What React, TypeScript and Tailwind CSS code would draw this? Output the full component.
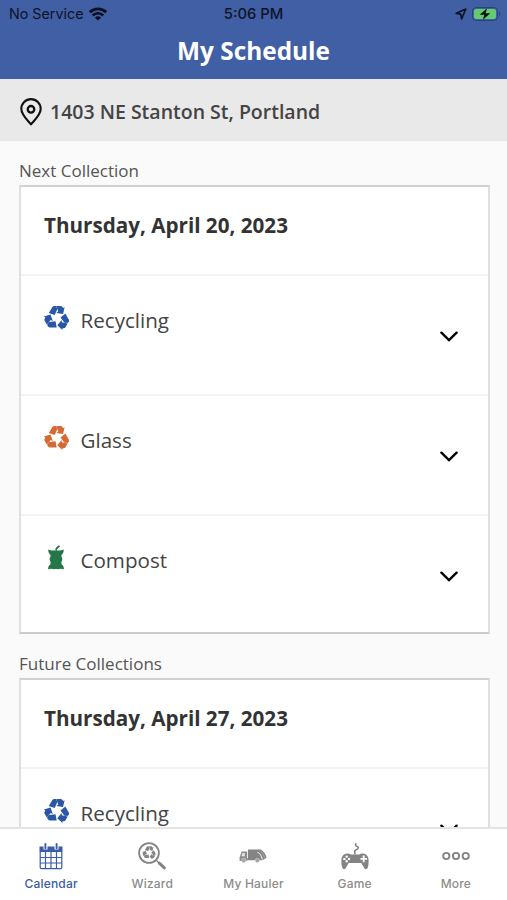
import type { ReactNode } from 'react'

type Kind = 'recycling' | 'glass' | 'compost'

const UPCOMING: { kind: Kind; label: string }[] = [
    { kind: 'recycling', label: 'Recycling' },
    { kind: 'glass', label: 'Glass' },
    { kind: 'compost', label: 'Compost' },
]

function WifiIcon() {
    return (
        <svg width="18" height="14" viewBox="0 0 18 14" fill="none" stroke="#0b1020">
            <path d="M.8 5.2a11.6 11.6 0 0 1 16.4 0" strokeWidth="2.7" />
            <path d="M3.7 8.5a7.5 7.5 0 0 1 10.6 0" strokeWidth="2.5" />
            <path d="M9 13.6 5.9 10.7a4.5 4.5 0 0 1 6.2 0Z" fill="#0b1020" stroke="none" />
        </svg>
    )
}

function LocationIcon() {
    return (
        <svg width="12" height="12" viewBox="0 0 12 12" fill="none">
            <path d="M10.8 1 1.2 5.3l4.5.9.9 4.6Z" stroke="#0b1428" strokeWidth="1.7" strokeLinejoin="round" />
        </svg>
    )
}

function BatteryIcon() {
    return (
        <svg width="30" height="14" viewBox="0 0 30 14">
            <rect x="0.5" y="0.5" width="25" height="13" rx="3.6" fill="none" stroke="#2b437a" />
            <rect x="2" y="2" width="22" height="10" rx="2" fill="#63cc6c" />
            <path d="M27.2 4.8c1.6.5 1.6 3.9 0 4.4Z" fill="#2b437a" />
            <path d="M15 1.2 7.7 7.7h4.6l-1.4 5.1 7.4-6.6h-4.7Z" fill="#0b1010" />
        </svg>
    )
}

function PinIcon() {
    return (
        <svg width="22" height="28" viewBox="0 0 22 28" fill="none" stroke="#111" strokeWidth="2.1">
            <path d="M11 26.4C7.6 22.3 1.3 17 1.3 10.8a9.7 9.7 0 0 1 19.4 0c0 6.2-6.3 11.5-9.7 15.6Z" strokeLinejoin="round" />
            <circle cx="11" cy="11.3" r="3.3" strokeWidth="2.3" />
        </svg>
    )
}

// One folded arrow of the recycling loop, turned three times round the centre
const ARROW_TURNS = ['rotate(0 50 57)', 'rotate(120 50 57)', 'rotate(240 50 57)']

function RecycleIcon({ size, color, x, y }: { size: number; color: string; x?: number; y?: number }) {
    return (
        <svg x={x} y={y} width={size} height={size} viewBox="-9 0 114 110" fill={color}>
            {ARROW_TURNS.map((turn) => (
                <g key={turn} transform={turn}>
                    <path d="M13 34 29 7q3-5 9-5l8 1 6 13-12 28Z" />
                    <path d="M47 2h20q5 0 8 5l3 5 7-4-7 31-31-5 9-6Z" />
                </g>
            ))}
        </svg>
    )
}

function CompostIcon() {
    return (
        <svg width="16" height="25" viewBox="0 0 16 25" fill="#247648">
            <path d="M7.2 5.6C7.3 3.2 8.6 1.3 11 .3l1.2 1.4C10 2.7 9 3.8 8.9 5.8Z" />
            <path d="M.3 4.4c2 .8 4.9 1.2 7.7 1.2s5.7-.4 7.7-1.2c.2 2.4-.6 4.1-2 5.1-.5 1.5-.3 2.5.5 3.5.5 1-.1 2.2-.6 3.2-.2 1.6-.3 2.7.1 3.3 1.6 1 2.3 2.5 2.2 4.8-2.300-.8-4-.8-5.900-.1-1.300-.3-2.600-.3-3.900 0-1.800-.7-3.700-.7-6 .1-.1-2.300.7-3.800 2.200-4.800.4-.7.300-1.700.1-3.300-.6-1-1.100-2.200-.6-3.200.8-1 1-2 .5-3.500C.9 8.500.1 6.800.3 4.400Z" />
        </svg>
    )
}

function KindIcon({ kind }: { kind: Kind }) {
    if (kind === 'compost') return <CompostIcon />
    return <RecycleIcon size={25} color={kind === 'glass' ? '#d36b32' : '#2a57a5'} />
}

function ChevronIcon() {
    return (
        <svg width="18" height="12" viewBox="0 0 18 12" fill="none" stroke="#050505" strokeWidth="2.4">
            <path d="m1.4 1.7 7.6 7.4 7.6-7.4" strokeLinecap="round" strokeLinejoin="miter" />
        </svg>
    )
}

function CalendarIcon() {
    return (
        <svg width="24" height="27" viewBox="0 0 24 27">
            <path d="M.5 3.5h4v3h4v-3h7v3h4v-3h4V9H.5Z" fill="#3b5ca6" />
            <path d="M1.2 9v15.5q0 1.2 1.2 1.2h19.2q1.2 0 1.2-1.2V9M6.5 9v17M12 9v17M17.5 9v17M1 14.5h22M1 20h22" fill="none" stroke="#3b5ca6" strokeWidth="1.2" />
            <path d="M6.4 1v4.3M17.6 1v4.3" stroke="#3b5ca6" strokeWidth="1.9" strokeLinecap="round" />
        </svg>
    )
}

function WizardIcon() {
    return (
        <svg width="28" height="28" viewBox="0 0 28 28">
            <circle cx="11" cy="11" r="9.9" fill="none" stroke="#848484" strokeWidth="1.8" />
            <RecycleIcon x={4.3} y={3.8} size={13.5} color="#848484" />
            <path d="m18.5 18.5 2.3 2.3" stroke="#848484" strokeWidth="1.3" />
            <path d="m21.3 21.2 5 4.7" stroke="#848484" strokeWidth="3" strokeLinecap="round" />
        </svg>
    )
}

function TruckIcon() {
    return (
        <svg width="28" height="14" viewBox="0 0 28 14">
            <path d="M2.6 2.5h5.6V12H.6V8.3Z" fill="#8e8e8e" />
            <path d="M3.5 4h2.3v3.2H2.4Z" fill="#e6e6e6" />
            <path d="M9 .5h9.2v10.7H8.2V9H9Z" fill="#848484" />
            <path d="M18 .5h3.6c2.7 1.2 4.8 4 6 8.3l-4 2.4H18Z" fill="#848484" />
            <path d="M18.3 3.2c2.6.8 4.3 3.6 5 7.5" fill="none" stroke="#fff" strokeWidth=".9" />
            <path d="M21.2 1.8c2.2 1.8 3.7 4.2 4.5 7.4" fill="none" stroke="#ccc" strokeWidth=".5" />
            <circle cx="4.7" cy="11.5" r="2.1" fill="#a2a2a2" stroke="#ddd" strokeWidth=".6" />
            <circle cx="18.3" cy="11.5" r="2.1" fill="#a2a2a2" stroke="#ddd" strokeWidth=".6" />
        </svg>
    )
}

function GameIcon() {
    return (
        <svg width="28" height="28" viewBox="0 0 28 28">
            <path d="M14 12.5c0-2-1.1-3 .3-4.2 1.3-1 3.2-1 3-2.7-.2-1.2-2.7-1-2.8-2.6 0-.8.3-1.4.6-1.9" fill="none" stroke="#848484" strokeWidth="1.6" />
            <path d="M6 11.6c1.7-.1 2.7.5 3.8 1h8.4c1.1-.5 2.1-1.1 3.8-1 3 .2 5.2 2.5 5.5 5.5.3 3.2.1 6.600-.9 9-.6 1.300-2.300 1.500-3.100.3l-3.200-5.300H7.700l-3.200 5.300c-.8 1.200-2.500 1-3.100-.3-1-2.400-1.200-5.800-.9-9 .3-3 2.500-5.300 5.500-5.500Z" fill="#848484" />
            <g fill="#fff">
                <circle cx="5.7" cy="14.6" r="1.2" />
                <circle cx="5.7" cy="19.2" r="1.2" />
                <circle cx="3.4" cy="16.9" r="1.2" />
                <circle cx="8" cy="16.9" r="1.2" />
            </g>
            <path d="M22.7 13.6v6.6M19.4 16.9H26" stroke="#fff" strokeWidth="1.9" />
        </svg>
    )
}

function MoreIcon() {
    return (
        <svg width="28" height="10" viewBox="0 0 28 10" fill="none" stroke="#848484" strokeWidth="1.9">
            <circle cx="4.3" cy="5" r="3.1" />
            <circle cx="14" cy="5" r="3.1" />
            <circle cx="23.7" cy="5" r="3.1" />
        </svg>
    )
}

const TABS: { label: string; icon: ReactNode }[] = [
    { label: 'Calendar', icon: <CalendarIcon /> },
    { label: 'Wizard', icon: <WizardIcon /> },
    { label: 'My Hauler', icon: <TruckIcon /> },
    { label: 'Game', icon: <GameIcon /> },
    { label: 'More', icon: <MoreIcon /> },
]

/**
 * One pickup date with the list of bins collected that day
 */
function CollectionCard({ date, items }: { date: string; items: { kind: Kind; label: string }[] }) {
    return (
        <section className="mr-[17px] ml-[19px] border-2 border-[#dfdfdf] border-t-[#d0d0d0] border-b-[#cbcbcb] bg-white">
            <h2 className="h-[87px] pt-[22px] pl-[23px] text-[20.65px] leading-8 font-bold text-[#333]">{date}</h2>
            {items.map((item) => (
                <div key={item.label} className="flex h-[120px] justify-between border-t-2 border-[#f3f3f3] pr-[30px] pl-[22px] last:h-[118px]">
                    <div className="flex h-[88px] items-center">
                        <span className="mb-[5px] flex w-[26px] justify-center">
                            <KindIcon kind={item.kind} />
                        </span>
                        <span className="ml-[11.5px] text-[20.6px] text-[#444]">{item.label}</span>
                    </div>
                    <span className="flex h-[122px] items-center">
                        <ChevronIcon />
                    </span>
                </div>
            ))}
        </section>
    )
}

export default function App() {
    return (
        <div className="flex h-[900px] w-[507px] flex-col overflow-hidden bg-[#fafafa] font-['Open_Sans',sans-serif]">
            <header className="h-[79px] shrink-0 bg-[#405fa5]">
                <div className="grid h-[27px] grid-cols-3 items-center pr-[5px] pl-[9px] font-['Inter',sans-serif] text-[14.3px] text-[#0e1426]">
                    <div className="flex items-center gap-[6px]">
                        <span>No Service</span>
                        <WifiIcon />
                    </div>
                    <span className="-ml-1 pt-0.5 text-center text-[14.8px] font-medium">5:06 PM</span>
                    <div className="flex items-center justify-end gap-[5px]">
                        <LocationIcon />
                        <BatteryIcon />
                    </div>
                </div>
                <h1 className="text-center text-[24.4px] leading-[48px] font-bold text-white">My Schedule</h1>
            </header>

            <div className="flex h-[62px] shrink-0 items-center gap-2 bg-[#e9e9e9] pt-[3px] pl-5">
                <PinIcon />
                <span className="text-[19.5px] font-semibold text-[#444]">1403 NE Stanton St, Portland</span>
            </div>

            <main className="min-h-0 flex-1 overflow-hidden">
                <p className="h-11 pt-[18px] pl-[19px] text-[17px] leading-6 text-[#555]">Next Collection</p>
                <CollectionCard date="Thursday, April 20, 2023" items={UPCOMING} />
                <p className="h-11 pt-[18px] pl-[19px] text-[17px] leading-6 text-[#555]">Future Collections</p>
                <CollectionCard date="Thursday, April 27, 2023" items={UPCOMING.slice(0, 1)} />
            </main>

            <nav className="grid h-[73px] shrink-0 grid-cols-5 border-t-2 border-[#e4e4e4] bg-white pr-px font-['Inter',sans-serif]">
                {TABS.map((tab, i) => (
                    <div key={tab.label} className={i === 0 ? 'flex flex-col items-center pl-px text-[#3b5ca6]' : 'flex flex-col items-center pl-px text-[#8c8c8c]'}>
                        <span className="flex h-[46px] items-center pt-[8px]">{tab.icon}</span>
                        <span className="text-[12px] leading-[17px] font-medium tracking-[0.2px]">{tab.label}</span>
                    </div>
                ))}
            </nav>
        </div>
    )
}
